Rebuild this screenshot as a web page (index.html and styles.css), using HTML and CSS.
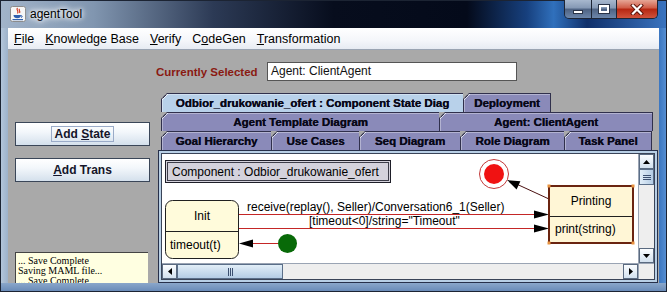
FILE: index.html
```html
<!DOCTYPE html>
<html>
<head>
  <meta charset="utf-8">
  <title>agentTool</title>
  <link rel="stylesheet" href="styles.css">
</head>
<body>
  <div class="window">
    <div class="titlebar">
      <svg class="app-icon" width="16" height="16" viewBox="0 0 16 16">
        <rect x="0.5" y="0.5" width="15" height="15" rx="2" fill="#f6f6f6" stroke="#8c8c8c"/>
        <path d="M7.5 2c-2 2 2 3 0 5.5M9.5 3c-1.3 1.3 1.3 2.3 0 4" stroke="#d23a22" stroke-width="1.2" fill="none"/>
        <path d="M3.5 9h7.5c0 2.2-1.6 3.3-3.7 3.3S3.5 11.2 3.5 9z" fill="#2f5fae"/>
        <path d="M11 9.6c1.6 0 1.6 1.8 0 1.8" stroke="#2f5fae" fill="none"/>
        <path d="M2.5 13.6h10.5" stroke="#2f5fae" stroke-width="1.2"/>
      </svg>
      <span class="title">agentTool</span>
      <div class="caption">
        <div class="cap-btn cap-min"><span class="min-glyph"></span></div>
        <div class="cap-btn cap-max"><span class="max-glyph"></span></div>
        <div class="cap-btn cap-close">
          <svg width="14" height="11" viewBox="0 0 14 11">
            <path d="M3 1.5l8 8M11 1.5l-8 8" stroke="#5a1208" stroke-width="4" stroke-linecap="square"/>
            <path d="M3 1.5l8 8M11 1.5l-8 8" stroke="#ffffff" stroke-width="2.2" stroke-linecap="square"/>
          </svg>
        </div>
      </div>
    </div>

    <div class="client">
      <div class="menubar">
        <span class="menu"><u>F</u>ile</span>
        <span class="menu"><u>K</u>nowledge Base</span>
        <span class="menu"><u>V</u>erify</span>
        <span class="menu">C<u>o</u>deGen</span>
        <span class="menu"><u>T</u>ransformation</span>
      </div>

      <div class="main">
        <div class="side">
          <div class="btn"><span class="focus">Add <u>S</u>tate</span></div>
          <div class="btn btn-trans"><span><u>A</u>dd Trans</span></div>
          <div class="log">
            <div>... Save Complete</div>
            <div>Saving MAML file...</div>
            <div>... Save Complete</div>
          </div>
        </div>

        <div class="work">
          <div class="selected">
            <span class="sel-label">Currently Selected</span>
            <div class="sel-field">Agent: ClientAgent</div>
          </div>

          <div class="tabs">
            <div class="tab-row">
              <div class="tab tab-active t-comp">Odbior_drukowanie_ofert : Component State Diag</div>
              <div class="tab t-deploy">Deployment</div>
            </div>
            <div class="tab-row">
              <div class="tab t-template">Agent Template Diagram</div>
              <div class="tab t-agent">Agent: ClientAgent</div>
            </div>
            <div class="tab-row">
              <div class="tab t-goal">Goal Hierarchy</div>
              <div class="tab t-use">Use Cases</div>
              <div class="tab t-seq">Seq Diagram</div>
              <div class="tab t-role">Role Diagram</div>
              <div class="tab t-task">Task Panel</div>
            </div>
          </div>

          <div class="tab-panel">
            <div class="scrollpane">
              <div class="viewport">
                <svg class="diagram" width="476" height="109" viewBox="1 1 476 109">
                  <!-- component label -->
                  <rect x="4.5" y="7.5" width="225" height="22" fill="#d4d2dc" stroke="#1e1e28"/>
                  <rect x="6.5" y="9.5" width="221" height="18" fill="none" stroke="#3c3c48"/>
                  <text x="11" y="23" class="dtext">Component : Odbior_drukowanie_ofert</text>

                  <!-- final state -->
                  <circle cx="333" cy="21" r="14.5" fill="none" stroke="#c23a3a"/>
                  <circle cx="333" cy="21" r="10" fill="#f01212"/>
                  <line x1="388" y1="46" x2="350" y2="28.5" stroke="#4a1010"/>
                  <polygon points="346.2,27.1 355.6,36.4 359.4,28.2" fill="#000"/>

                  <!-- Init state -->
                  <rect x="4.5" y="47.5" width="73" height="58" rx="7" fill="#fffbdb" stroke="#202020"/>
                  <line x1="4.5" y1="78.5" x2="77.5" y2="78.5" stroke="#202020"/>
                  <text x="41" y="67" class="dtext" text-anchor="middle">Init</text>
                  <text x="9" y="95.5" class="dtext">timeout(t)</text>

                  <!-- transitions -->
                  <line x1="78" y1="61.5" x2="375" y2="61.5" stroke="#c42626"/>
                  <polygon points="373,57.5 388,61.5 373,65.5" fill="#000"/>
                  <text x="86" y="58" class="dtext">receive(replay(), Seller)/Conversation6_1(Seller)</text>
                  <line x1="78" y1="75.5" x2="375" y2="75.5" stroke="#c42626"/>
                  <polygon points="373,71.5 388,75.5 373,79.5" fill="#000"/>
                  <text x="148" y="71.5" class="dtext">[timeout&lt;0]/string="Timeout"</text>

                  <!-- initial state -->
                  <line x1="90" y1="90.5" x2="117" y2="90.5" stroke="#c42626"/>
                  <polygon points="78,90.5 92,86.5 92,94.5" fill="#000"/>
                  <circle cx="126.5" cy="90.5" r="9.5" fill="#086a08"/>

                  <!-- Printing state (selected) -->
                  <rect x="388" y="33" width="84" height="57" fill="#fff6d6" stroke="#6a2410" stroke-width="2"/>
                  <line x1="389" y1="63.5" x2="471" y2="63.5" stroke="#202020"/>
                  <text x="430" y="52" class="dtext" text-anchor="middle">Printing</text>
                  <text x="394" y="80" class="dtext">print(string)</text>
                  <rect x="386.5" y="31.5" width="3" height="3" fill="#e8923e"/>
                  <rect x="470.5" y="31.5" width="3" height="3" fill="#e8923e"/>
                  <rect x="386.5" y="88.5" width="3" height="3" fill="#e8923e"/>
                  <rect x="470.5" y="88.5" width="3" height="3" fill="#e8923e"/>
                </svg>
              </div>

              <div class="vscroll">
                <div class="sb-btn">
                  <svg width="7" height="4" viewBox="0 0 7 4"><polygon points="0,4 3.5,0 7,4" fill="#000"/></svg>
                </div>
                <div class="vthumb">
                  <svg width="8" height="5" viewBox="0 0 8 5"><path d="M0 0.5h8M0 2.5h8M0 4.5h8" stroke="#3c5070"/></svg>
                </div>
                <div class="sb-track"></div>
                <div class="sb-btn">
                  <svg width="7" height="4" viewBox="0 0 7 4"><polygon points="0,0 7,0 3.5,4" fill="#000"/></svg>
                </div>
              </div>

              <div class="hscroll">
                <div class="sb-btn">
                  <svg width="4" height="7" viewBox="0 0 4 7"><polygon points="4,0 4,7 0,3.5" fill="#000"/></svg>
                </div>
                <div class="hthumb">
                  <svg width="5" height="8" viewBox="0 0 5 8"><path d="M0.5 0v8M2.5 0v8M4.5 0v8" stroke="#3c5070"/></svg>
                </div>
                <div class="sb-track"></div>
                <div class="sb-btn">
                  <svg width="4" height="7" viewBox="0 0 4 7"><polygon points="0,0 4,3.5 0,7" fill="#000"/></svg>
                </div>
              </div>

              <div class="corner"></div>
            </div>
          </div>
        </div>
      </div>
    </div>
  </div>
</body>
</html>
```

FILE: styles.css
```css
* {
  box-sizing: border-box;
}

body {
  margin: 0;
  background: #1b2a44;
  font-family: "Liberation Sans", Arial, sans-serif;
}

/* window frame */

.window {
  width: 667px;
  height: 292px;
  display: flex;
  flex-direction: column;
  padding: 0 8px 9px 8px;
  background:
    linear-gradient(to bottom, transparent 283px, #8aa7ca 283px, #6688b6 100%),
    linear-gradient(to right, #b6c8dc 0, #9db2ca 8px, transparent 8px, transparent 659px, #3b76c0 659px, #5a92d4 100%) 0 28px / 100% 100% no-repeat,
    linear-gradient(to right, #a2b4ca 0%, #8196b0 14%, #2c3a55 32%, #070d1d 50%, #040a1a 70%, #17407e 79%, #3070bc 83%, #10306a 88%, #3a74c0 100%);
  box-shadow: inset 0 0 0 1px #1c2433;
}

.titlebar {
  height: 28px;
  display: flex;
  align-items: center;
  padding-left: 2px;
}

.app-icon {
  flex: none;
}

.title {
  margin-left: 4px;
  font-size: 12px;
  color: #000;
  text-shadow: 0 0 4px #fff, 0 0 6px #fff, 0 0 8px #e8eef6;
}

.caption {
  margin-left: auto;
  margin-right: 1px;
  align-self: flex-start;
  display: flex;
  height: 19px;
  border: 1px solid #1d2535;
  border-top: none;
  border-radius: 0 0 5px 5px;
  overflow: hidden;
}

.cap-btn {
  display: flex;
  align-items: center;
  justify-content: center;
  border-left: 1px solid #1d2535;
}

.cap-min {
  width: 26px;
  border-left: none;
  background: linear-gradient(#a8b8ce, #8498b4 45%, #4e6282 50%, #6c86aa 100%);
}

.cap-max {
  width: 25px;
  background: linear-gradient(#a8b8ce, #8498b4 45%, #4e6282 50%, #6c86aa 100%);
}

.cap-close {
  width: 41px;
  background: linear-gradient(#e6a696, #cf5a45 45%, #b52611 50%, #d0533c 100%);
}

.min-glyph {
  width: 10px;
  height: 4px;
  margin-top: 6px;
  background: #fff;
  border: 1px solid #2a3448;
}

.max-glyph {
  width: 10px;
  height: 8px;
  border: 2px solid #fff;
  outline: 1px solid #2a3448;
}

/* client area */

.client {
  flex: 1;
  display: flex;
  flex-direction: column;
  background: #a9a9a9;
}

.menubar {
  height: 22px;
  display: flex;
  align-items: center;
  gap: 11px;
  padding-left: 6px;
  font-size: 12.5px;
  color: #000;
  background: linear-gradient(#ffffff, #f4f6fa 60%, #e7ebf2);
  border-bottom: 1px solid #9aa4b2;
}

.main {
  flex: 1;
  display: flex;
}

.side {
  width: 147px;
  flex: none;
  display: flex;
  flex-direction: column;
  padding-top: 72px;
}

.btn {
  margin-left: 7px;
  width: 135px;
  height: 24px;
  display: flex;
  align-items: center;
  justify-content: center;
  font-size: 12px;
  font-weight: bold;
  color: #15152a;
  background: linear-gradient(#ffffff, #f3f7fb 40%, #d4e0ec);
  border: 1px solid #3a4658;
}

.btn-trans {
  margin-top: 12px;
}

.focus {
  border: 1px solid #9aabc8;
  padding: 0 2px;
  line-height: 14px;
}

.log {
  margin-top: 70px;
  margin-left: 7px;
  width: 133px;
  height: 31px;
  overflow: hidden;
  padding: 3px 0 0 2px;
  background: #ffffe1;
  border-top: 1px solid #444;
  border-left: 1px solid #444;
  font-family: "Liberation Serif", "Times New Roman", serif;
  font-size: 10px;
  line-height: 10px;
  color: #000;
}

/* right side */

.work {
  flex: 1;
  display: flex;
  flex-direction: column;
  padding-top: 12px;
}

.selected {
  display: flex;
  align-items: center;
  height: 19px;
  margin-left: 1px;
}

.sel-label {
  width: 111px;
  flex: none;
  white-space: nowrap;
  font-size: 11.5px;
  font-weight: bold;
  color: #8a1a12;
}

.sel-field {
  width: 250px;
  height: 19px;
  padding-left: 3px;
  line-height: 17px;
  font-size: 12px;
  color: #111;
  background: #fff;
  border: 1px solid #555;
}

.tabs {
  margin-top: 12px;
  margin-left: 6px;
}

.tab-row {
  display: flex;
  height: 19px;
}

.tab {
  height: 19px;
  flex: none;
  border-top: 1px solid #30304c;
  border-left: 1px solid #30304c;
  font-size: 11.5px;
  font-weight: bold;
  line-height: 18px;
  text-align: center;
  white-space: nowrap;
  color: #080818;
  text-shadow: 0.3px 0 0 #080818;
  background: linear-gradient(135deg, transparent 4.2px, #30304c 4.2px, #30304c 5.2px, #dde0ee 5.2px, #dde0ee 6px, #8a8ab9 6px);
  background-origin: border-box;
  box-shadow: inset 1px 1px 0 rgba(255, 255, 255, 0.35);
  clip-path: polygon(6px 0, 100% 0, 100% 100%, 0 100%, 0 6px);
}

.tab:last-child {
  border-right: 1px solid #30304c;
}

.tab-active {
  background: linear-gradient(135deg, transparent 4.2px, #30304c 4.2px, #30304c 5.2px, #f2f7fc 5.2px, #f2f7fc 6px, #b8d1ea 6px);
  background-origin: border-box;
}

.t-comp { width: 302px; }
.t-deploy { width: 88px; }
.t-template { width: 278px; }
.t-agent { width: 214px; }
.t-goal { width: 110px; }
.t-use { width: 88px; }
.t-seq { width: 101px; }
.t-role { width: 104px; }
.t-task { width: 88px; }

.tab-panel {
  margin-left: 3px;
  width: 500px;
  height: 133px;
  padding: 2px;
  background: #b8cfe5;
  border: 1px solid #27304a;
}

.scrollpane {
  height: 100%;
  display: grid;
  grid-template-columns: 1fr 16px;
  grid-template-rows: 1fr 16px;
  background: #fff;
  border: 1px solid #3a4458;
}

.viewport {
  overflow: hidden;
  background: #fff;
}

.diagram {
  display: block;
}

.dtext {
  font-family: "Liberation Sans", Arial, sans-serif;
  font-size: 12px;
  fill: #000;
}

.vscroll {
  display: flex;
  flex-direction: column;
  background: #eeeeee;
  border-left: 1px solid #9aa4b4;
}

.hscroll {
  display: flex;
  background: #eeeeee;
  border-top: 1px solid #9aa4b4;
}

.sb-btn {
  width: 15px;
  height: 15px;
  flex: none;
  display: flex;
  align-items: center;
  justify-content: center;
  background: linear-gradient(#fbfdff, #d2e0ee);
  border: 1px solid #5a6a80;
}

.sb-track {
  flex: 1;
}

.vthumb {
  height: 16px;
  flex: none;
  display: flex;
  align-items: center;
  justify-content: center;
  background: linear-gradient(to right, #e2eef8, #b4cce4);
  border: 1px solid #5a6e88;
}

.hthumb {
  width: 106px;
  flex: none;
  display: flex;
  align-items: center;
  justify-content: center;
  background: linear-gradient(#e2eef8, #b4cce4);
  border: 1px solid #5a6e88;
}

.corner {
  background: #eeeeee;
  border-top: 1px solid #9aa4b4;
  border-left: 1px solid #9aa4b4;
}
```
